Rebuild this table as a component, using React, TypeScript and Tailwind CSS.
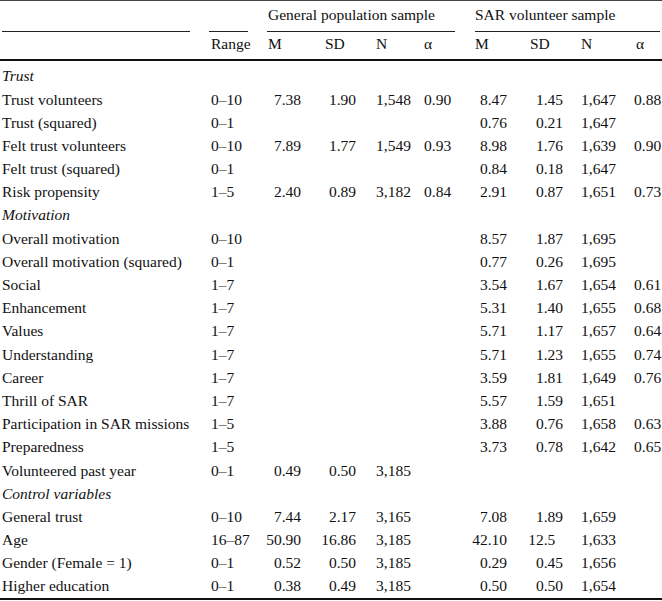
const rows: (string | null)[][] = [
  ["Trust volunteers", "0–10", "7.38", "1.90", "1,548", "0.90", "8.47", "1.45", "1,647", "0.88"],
  ["Trust (squared)", "0–1", null, null, null, null, "0.76", "0.21", "1,647", null],
  ["Felt trust volunteers", "0–10", "7.89", "1.77", "1,549", "0.93", "8.98", "1.76", "1,639", "0.90"],
  ["Felt trust (squared)", "0–1", null, null, null, null, "0.84", "0.18", "1,647", null],
  ["Risk propensity", "1–5", "2.40", "0.89", "3,182", "0.84", "2.91", "0.87", "1,651", "0.73"],
];

const motivation: (string | null)[][] = [
  ["Overall motivation", "0–10", null, null, null, null, "8.57", "1.87", "1,695", null],
  ["Overall motivation (squared)", "0–1", null, null, null, null, "0.77", "0.26", "1,695", null],
  ["Social", "1–7", null, null, null, null, "3.54", "1.67", "1,654", "0.61"],
  ["Enhancement", "1–7", null, null, null, null, "5.31", "1.40", "1,655", "0.68"],
  ["Values", "1–7", null, null, null, null, "5.71", "1.17", "1,657", "0.64"],
  ["Understanding", "1–7", null, null, null, null, "5.71", "1.23", "1,655", "0.74"],
  ["Career", "1–7", null, null, null, null, "3.59", "1.81", "1,649", "0.76"],
  ["Thrill of SAR", "1–7", null, null, null, null, "5.57", "1.59", "1,651", null],
  ["Participation in SAR missions", "1–5", null, null, null, null, "3.88", "0.76", "1,658", "0.63"],
  ["Preparedness", "1–5", null, null, null, null, "3.73", "0.78", "1,642", "0.65"],
  ["Volunteered past year", "0–1", "0.49", "0.50", "3,185", null, null, null, null, null],
];

const controls: (string | null)[][] = [
  ["General trust", "0–10", "7.44", "2.17", "3,165", null, "7.08", "1.89", "1,659", null],
  ["Age", "16–87", "50.90", "16.86", "3,185", null, "42.10", "12.5", "1,633", null],
  ["Gender (Female = 1)", "0–1", "0.52", "0.50", "3,185", null, "0.29", "0.45", "1,656", null],
  ["Higher education", "0–1", "0.38", "0.49", "3,185", null, "0.50", "0.50", "1,654", null],
];

const grid = "grid grid-cols-[206px_58px_54px_54px_48px_51px_51px_55px_55px_30px]";

const cellClass = [
  "pl-[2px]",
  "pl-[5px]",
  "text-right pr-[17px]",
  "text-right pr-[16px]",
  "pl-[4px]",
  "pl-[4px]",
  "text-right pr-[15px]",
  "text-right pr-[14px]",
  "pl-[4px]",
  "pl-[2px]",
];

// decimal alignment: pad one-decimal numbers with a hidden digit
const Num = ({ v }: { v: string }) =>
  /\.\d$/.test(v) ? (
    <>
      {v}
      <span className="invisible">0</span>
    </>
  ) : (
    <>{v}</>
  );

const Row = ({ r }: { r: (string | null)[] }) => (
  <div className={`${grid} h-[23.2px] items-center`}>
    {r.map((v, i) => (
      <div key={i} className={`${cellClass[i]} whitespace-nowrap`}>
        {v ? <Num v={v} /> : null}
      </div>
    ))}
  </div>
);

const Section = ({ title }: { title: string }) => (
  <div className="h-[23.2px] flex items-center pl-[2px] italic">{title}</div>
);

export default function App() {
  return (
    <div className="w-[662px] h-[601px] bg-white text-[#111] text-[15.5px] leading-none font-['Liberation_Serif',serif]">
      <div className="border-t-[1.5px] border-[#444]">
        <div className={`${grid} h-[31px]`}>
          <div className="flex flex-col justify-end">
            <div className="ml-[2px] mr-[16px] border-b border-[#222]" />
          </div>
          <div className="flex flex-col justify-end">
            <div className="ml-[3px] mr-[16px] border-b border-[#222]" />
          </div>
          <div className="col-span-4 flex flex-col justify-between">
            <div className="pl-[4px] pt-[6px]">General population sample</div>
            <div className="ml-[3px] mr-[16px] border-b border-[#222]" />
          </div>
          <div className="col-span-4 flex flex-col justify-between">
            <div className="pl-[4px] pt-[6px]">SAR volunteer sample</div>
            <div className="ml-[4px] mr-[2px] border-b border-[#222]" />
          </div>
        </div>
        <div className={`${grid} h-[26.5px] items-center pb-[3px]`}>
          <div />
          <div className="pl-[5px]">Range</div>
          <div className="pl-[4px]">M</div>
          <div className="pl-[7px]">SD</div>
          <div className="pl-[4px]">N</div>
          <div className="pl-[4px]">α</div>
          <div className="pl-[4px]">M</div>
          <div className="pl-[8px]">SD</div>
          <div className="pl-[4px]">N</div>
          <div className="pl-[4px]">α</div>
        </div>
        <div className="border-t-2 border-[#111] pt-[4px] border-b-2">
          <Section title="Trust" />
          {rows.map((r) => (
            <Row key={r[0]} r={r} />
          ))}
          <Section title="Motivation" />
          {motivation.map((r) => (
            <Row key={r[0]} r={r} />
          ))}
          <Section title="Control variables" />
          {controls.map((r) => (
            <Row key={r[0]} r={r} />
          ))}
        </div>
      </div>
    </div>
  );
}
